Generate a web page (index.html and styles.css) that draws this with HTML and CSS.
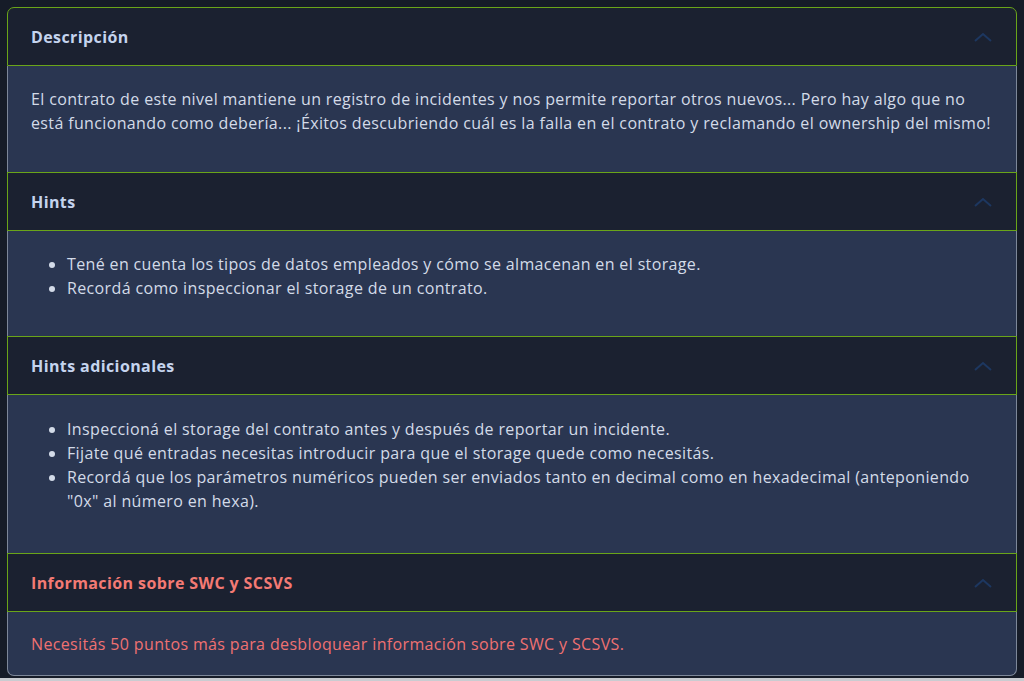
FILE: index.html
```html
<!DOCTYPE html>
<html lang="es">
<head>
<meta charset="utf-8">
<link rel="stylesheet" href="styles.css">
</head>
<body>
<div class="card">
  <section class="panel first">
    <div class="head"><span>Descripción</span><svg class="chev" viewBox="0 0 18 10"><path d="M1 9 L9 2 L17 9"/></svg></div>
    <div class="body"><p>El contrato de este nivel mantiene un registro de incidentes y nos permite reportar otros nuevos... Pero hay algo que no está funcionando como debería... ¡Éxitos descubriendo cuál es la falla en el contrato y reclamando el ownership del mismo!</p></div>
  </section>
  <section class="panel hints">
    <div class="head"><span>Hints</span><svg class="chev" viewBox="0 0 18 10"><path d="M1 9 L9 2 L17 9"/></svg></div>
    <div class="body"><ul>
      <li>Tené en cuenta los tipos de datos empleados y cómo se almacenan en el storage.</li>
      <li>Recordá como inspeccionar el storage de un contrato.</li>
    </ul></div>
  </section>
  <section class="panel extra">
    <div class="head"><span>Hints adicionales</span><svg class="chev" viewBox="0 0 18 10"><path d="M1 9 L9 2 L17 9"/></svg></div>
    <div class="body"><ul>
      <li>Inspeccioná el storage del contrato antes y después de reportar un incidente.</li>
      <li>Fijate qué entradas necesitas introducir para que el storage quede como necesitás.</li>
      <li>Recordá que los parámetros numéricos pueden ser enviados tanto en decimal como en hexadecimal (anteponiendo "0x" al número en hexa).</li>
    </ul></div>
  </section>
  <section class="panel last">
    <div class="head red"><span>Información sobre SWC y SCSVS</span><svg class="chev" viewBox="0 0 18 10"><path d="M1 9 L9 2 L17 9"/></svg></div>
    <div class="body red"><p>Necesitás 50 puntos más para desbloquear información sobre SWC y SCSVS.</p></div>
  </section>
</div>
<div class="edge"></div>
</body>
</html>
```
FILE: styles.css
```css
html, body { margin: 0; padding: 0; }
body {
  background: #161c28;
  font-family: "Open Sans", "Noto Sans", sans-serif;
  font-size: 16px;
  line-height: 24px;
  letter-spacing: 0.36px;
  color: #d3dbe8;
  height: 681px;
  overflow: hidden;
  padding: 7px 0 0 7px;
  box-sizing: border-box;
}
.card {
  width: 1010px;
}
.head {
  display: flex;
  align-items: center;
  justify-content: space-between;
  height: 57px;
  padding: 0 24px 0 23px;
  background: #1b2130;
  border: 1px solid #6aa519;
  font-weight: 700;
  color: #c5d4ee;
  letter-spacing: 0.4px;
}
.first .head { border-radius: 7px 7px 0 0; }
.chev { width: 18px; height: 10px; fill: none; stroke: #1d3760; stroke-width: 2; }
.body {
  background: #2a3651;
  border-left: 1px solid #7d8799;
  border-right: 1px solid #7d8799;
  padding: 21px 17px 37px 23px;
}
.hints .body { padding-bottom: 36px; }
.extra .body { padding-top: 22px; padding-bottom: 40px; }
.body p { margin: 0; }
.body ul { margin: 0; padding-left: 36px; }
.last .body {
  padding: 20px 17px 19px 23px;
  border-bottom: 1px solid #7d8799;
  border-radius: 0 0 7px 7px;
}
.red { color: #f07171; }
.head.red { color: #f47a74; }
.edge {
  position: fixed;
  left: 0; right: 0; bottom: 0;
  height: 3px;
  background: #c9ccd1;
}
```
